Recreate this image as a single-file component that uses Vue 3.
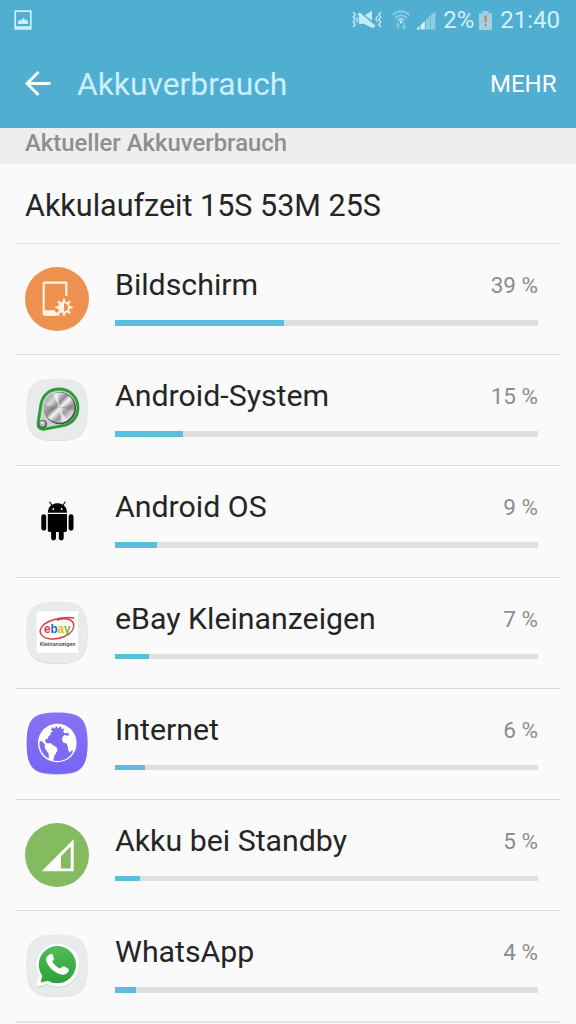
<template>
  <div class="screen">
    <header class="header">
      <!-- Statusleiste -->
      <div class="status-bar">
        <svg class="picture-icon" viewBox="0 0 18 20">
          <path d="M1.2 1.2H16.8V18.8H1.2Z" fill="none" stroke="#cdeefa" stroke-width="1.7" />
          <path d="M1 16.2H17V19H1Z" fill="#cdeefa" />
          <path d="M4 14V11.5L6 9.5L7.3 10.8L9.3 7.8L11 10L12.3 9.2L14 12V14Z" fill="#cdeefa" />
        </svg>
        <div class="status-right">
          <svg class="mute-icon" viewBox="0 0 30 20">
            <path d="M7 5.7H12L20 0.8V18L12 13.8H7Z" fill="#c3eaf8" />
            <path d="M5 0.2L25 16" stroke="#50aed1" stroke-width="2" />
            <path d="M6.5 3.5L22.5 17" stroke="#c3eaf8" stroke-width="3.2" />
            <path
              d="M1 2L3.3 4.5L1.2 7L3.3 9.5L1.2 12L3.3 14.5L1 17M4.5 7L6 9.7L4.5 12.5M29 2L26.7 4.5L28.8 7L26.7 9.5L28.8 12L26.7 14.5L29 17M25.5 6L23.8 9L25.5 12"
              fill="none" stroke="#c3eaf8" stroke-width="1.3"
            />
          </svg>
          <svg class="wifi-icon" viewBox="0 0 18 20">
            <path d="M0.8 5C5.5 0.2 12.5 0.2 17.2 5M3.3 8C6.7 4.7 11.3 4.7 14.7 8" fill="none" stroke="#8ed0e8" stroke-width="1.9" />
            <path d="M5.8 10.4C7.7 8.7 10.3 8.7 12.2 10.4" fill="none" stroke="#b3e2f3" stroke-width="1.7" />
            <circle cx="9" cy="12" r="1.4" fill="#d3f2fc" />
            <path d="M5.8 19V14M4 15.8L5.8 13.7L7.6 15.8M12.2 13V18M10.4 16.4L12.2 18.5L14 16.4" fill="none" stroke="#81c8e2" stroke-width="1.6" />
          </svg>
          <svg class="signal-icon" viewBox="0 0 20 19">
            <path d="M0 18.5L3.6 15V18.5Z" fill="#d3f2fc" />
            <path d="M4.7 18.5V14L8.8 10V18.5Z" fill="#d3f2fc" />
            <path d="M9.6 18.5V9.2L14.2 4.8V18.5ZM14.6 18.5V4.4L19.4 0V18.5Z" fill="#8bcde6" />
          </svg>
          <span class="battery-level">2%</span>
          <svg class="battery-icon" viewBox="0 0 13 19">
            <path d="M0 2.2H3.5V0H9.5V2.2H13V19H0Z" fill="#9bd2e5" />
            <path d="M5.5 4.5H7.7L7.3 12H5.9ZM5.6 13.3H7.6V15.3H5.6Z" fill="#cf7550" />
          </svg>
          <span class="clock">21:40</span>
        </div>
      </div>

      <!-- Titelleiste -->
      <div class="title-bar">
        <svg class="back-icon" viewBox="0 0 26 26">
          <path d="M13.5 1L2 12.5L13.5 24M2 12.5H25.5" fill="none" stroke="#fff" stroke-width="2.9" />
        </svg>
        <h1 class="title">Akkuverbrauch</h1>
        <span class="more">MEHR</span>
      </div>
    </header>

    <div class="section-title"><span>Aktueller Akkuverbrauch</span></div>

    <main class="content">
      <div class="runtime"><span>Akkulaufzeit 15S 53M 25S</span></div>

      <div v-for="item in items" :key="item.name" class="row">
        <svg class="app-icon" viewBox="0 0 64 64">
          <defs>
            <linearGradient id="metal" x1="0" y1="0" x2="1" y2="1">
              <stop offset="0" stop-color="#777" />
              <stop offset="0.28" stop-color="#d8d8d8" />
              <stop offset="0.42" stop-color="#8b8b8b" />
              <stop offset="0.52" stop-color="#f4f4f4" />
              <stop offset="0.66" stop-color="#999" />
              <stop offset="0.82" stop-color="#ddd" />
              <stop offset="1" stop-color="#555" />
            </linearGradient>
            <linearGradient id="violet" x1="0" y1="0" x2="0" y2="1">
              <stop offset="0" stop-color="#8b71f3" />
              <stop offset="1" stop-color="#7565f6" />
            </linearGradient>
            <linearGradient id="green" x1="0" y1="0" x2="0" y2="1">
              <stop offset="0" stop-color="#52bd56" />
              <stop offset="1" stop-color="#2ba03c" />
            </linearGradient>
          </defs>

          <template v-if="item.tile">
            <path :d="tilePath" transform="translate(0 0.7)" fill="#d6dcdb" />
            <path :d="tilePath" fill="#e7eceb" stroke="#dfe5e4" stroke-width="0.6" />
          </template>

          <g v-if="item.icon === 'display'">
            <circle cx="32" cy="32" r="32" fill="#ee904f" />
            <path d="M41.3 29V16.2Q41.3 15.7 40.8 15.7H20Q18.7 15.7 18.7 17V46Q18.7 47.6 20.2 47.6H31" fill="none" stroke="#fff3e2" stroke-width="2.2" />
            <path d="M18.7 43.3H29.5L31 45.5L34.5 46.5V48.6H20Q18.7 48.6 18.7 47.3Z" fill="#fff3e2" />
            <path v-for="n in 8" :key="n" d="M37.4 36L38.1 31.6H39.9L40.6 36Z" :transform="`rotate(${n * 45} 39 40.3)`" fill="#fff3e2" />
            <circle cx="39" cy="40.3" r="5" fill="#ee904f" stroke="#fff3e2" stroke-width="1.8" />
            <path d="M39 35.3A5 5 0 0 0 39 45.3Z" fill="#fff3e2" />
          </g>

          <g v-else-if="item.icon === 'system'">
            <path d="M15.8 27C17.5 16.5 25 11 34.3 11A18.7 18.7 0 0 1 53 29.8C53 39 47 45.8 38 47.7L19.5 51.2C15.3 51.7 12.6 49.5 13 45.5Z" fill="#c9d2ca" stroke="#4f8f54" stroke-width="2.8" />
            <path d="M15.8 27C17.5 16.5 25 11 34.3 11A18.7 18.7 0 0 1 53 29.8C53 39 47 45.8 38 47.7L19.5 51.2C15.3 51.7 12.6 49.5 13 45.5Z" fill="none" stroke="#20a52d" stroke-width="2.1" />
            <circle cx="35" cy="30.2" r="16" fill="#4c4c4c" />
            <circle cx="34.2" cy="29.6" r="15.2" fill="url(#metal)" />
            <path d="M34.2 29.6L20 35A15 15 0 0 1 19.2 27ZM34.2 29.6L48.8 26A15 15 0 0 1 49 32.5Z" fill="#666" opacity="0.35" />
            <path d="M34.2 29.6L28 16L33 14.4ZM34.2 29.6L37 44.4L42 42.5Z" fill="#fff" opacity="0.6" />
            <circle cx="17.9" cy="46.1" r="4.1" fill="#555" />
            <circle cx="17.5" cy="45.7" r="3" fill="#b7b7b7" />
            <path d="M15.7 44.5L18.2 43.7L18 46.3Z" fill="#fff" />
          </g>

          <g v-else-if="item.icon === 'android'">
            <path d="M22.8 23.8C22.8 11.2 42 11.2 42 23.8Z" />
            <path d="M27 16.5L24.7 13M37.8 16.5L40.1 13" stroke="#000" stroke-width="1.1" stroke-linecap="round" />
            <circle cx="28.3" cy="20" r="0.9" fill="#fafafa" />
            <circle cx="36.7" cy="20" r="0.9" fill="#fafafa" />
            <path d="M22.8 25H42V41.3Q42 43 40.3 43H24.5Q22.8 43 22.8 41.3Z" />
            <rect x="16.3" y="25.3" width="4.9" height="16.4" rx="2.4" />
            <rect x="43.6" y="25.3" width="4.9" height="16.4" rx="2.4" />
            <rect x="26.1" y="38" width="4.9" height="13.4" rx="2.4" />
            <rect x="33.8" y="38" width="4.9" height="13.4" rx="2.4" />
          </g>

          <g v-else-if="item.icon === 'ebay'">
            <path d="M11.7 10.2H53V51.8H11.7Z" fill="#fff" />
            <path d="M48.5 17C42 15.5 31 17.5 24.5 20.3C17 23.5 13.5 29 16 33C19.5 39.2 31 39 39.5 35.5C46 32.8 49.3 28 48.7 23.5C47.8 17.8 40 16.5 32.5 19" fill="none" stroke="#cf4444" stroke-width="1.5" stroke-linecap="round" />
            <text class="ebay-logo" x="19" y="32.3" textLength="26.6" lengthAdjust="spacingAndGlyphs"><tspan fill="#dc3444">e</tspan><tspan fill="#2865ba">b</tspan><tspan fill="#edb224">a</tspan><tspan fill="#83b52e">y</tspan></text>
            <text class="ebay-caption" x="14.7" y="44.6" textLength="35.8" lengthAdjust="spacingAndGlyphs">Kleinanzeigen</text>
          </g>

          <g v-else-if="item.icon === 'internet'">
            <path :d="tilePath" transform="translate(0 0.4)" fill="#b9b3e0" />
            <path :d="tilePath" transform="translate(0 -0.4)" fill="url(#violet)" />
            <circle cx="32.3" cy="31" r="19.3" fill="#fff" />
            <!-- Atlantik -->
            <path
              d="M20 28.6L21.5 26.6L22.6 27.4L23.5 24.3L25.8 22.6L25.4 20.3L28 20L26 17.8L27.5 15L30 16.8L31 13.8L33 16.6L35.3 14L36.8 17L39.5 16.6L38.2 19.4L39.8 21.2L42.6 20.8L44.6 22.8L42 24L40.3 22.8L37.8 24.3L37 27.6L38 30.5L41.5 31.6L42.8 34.4L43.2 38.6L45 40.4L47.4 37.6L47.6 40.5C44 46.5 38.5 49 32 49L28 48.4L29.6 43.5L32.6 38.2L31.4 35L28 33.3L26 31.2L21.4 31.2Z"
              fill="#7e6bf5"
            />
            <!-- Pazifik -->
            <path d="M15 29L17.3 29.6L20 32.6L19.6 35.3L21 38L23.5 41.2L24 46.6C18.5 44 14.3 37.5 14.4 31Z" fill="#7e6bf5" />
          </g>

          <g v-else-if="item.icon === 'standby'">
            <circle cx="32" cy="32" r="32" fill="#84bb60" />
            <path d="M16.7 48.3L48.7 16.3V48.3ZM36 33.2V45.4H45.7V23.5Z" fill="#fdfff9" fill-rule="evenodd" />
          </g>

          <g v-else-if="item.icon === 'whatsapp'">
            <path d="M11.8 54.3L14.2 42.2A21.6 21.6 0 1 1 22.6 50.7Z" fill="#aab5ae" opacity="0.5" />
            <path d="M11.3 53L13.8 41.2A21.6 21.6 0 1 1 22.4 50Z" fill="#fff" />
            <path d="M15.7 48.6L17.4 41.3L24 46.6Z" fill="#2fa33f" />
            <circle cx="32.3" cy="30.7" r="18.6" fill="url(#green)" />
            <path d="M24.5 20.4Q26.5 18.8 27.7 20.7L29 24.2Q29.3 25.5 27.3 27.3Q29.8 32.4 35 34.4L37.5 32.5Q38.3 31.9 39.3 32.5L43.1 34.6Q44.4 35.4 43.5 37.6Q41.2 41.4 36.5 40.6C28.5 38.7 22.7 32 21.2 26.8Q20.4 22.8 24.5 20.4Z" fill="#fff" />
          </g>
        </svg>

        <div class="usage">
          <div class="usage-text">
            <span class="name">{{ item.name }}</span>
            <span class="percent">{{ item.percent }} %</span>
          </div>
          <div class="bar">
            <div class="bar-fill" :style="{ width: `${item.percent + 1}%` }"></div>
          </div>
        </div>
      </div>
      <div class="last-line"></div>
    </main>
  </div>
</template>

<script setup>
import { ref } from 'vue';

// abgerundete Kachel hinter den App-Symbolen
const tilePath = 'M32 1C55 1 62.5 6 62.5 31.5S55 62.3 32 62.3S1.7 57 1.7 31.5S9 1 32 1Z';

const items = ref([
  { name: 'Bildschirm', percent: 39, icon: 'display' },
  { name: 'Android-System', percent: 15, icon: 'system', tile: true },
  { name: 'Android OS', percent: 9, icon: 'android' },
  { name: 'eBay Kleinanzeigen', percent: 7, icon: 'ebay', tile: true },
  { name: 'Internet', percent: 6, icon: 'internet' },
  { name: 'Akku bei Standby', percent: 5, icon: 'standby' },
  { name: 'WhatsApp', percent: 4, icon: 'whatsapp', tile: true },
]);
</script>

<style>
body {
  margin: 0;
  overflow: hidden;
}
</style>

<style scoped>
.screen {
  width: 576px;
  height: 1024px;
  overflow: hidden;
  background: #fafafa;
  font-family: Roboto, "Liberation Sans", sans-serif;
  color: #252525;
}

.header {
  height: 128px;
  background: #50aed1;
}

.status-bar {
  display: flex;
  justify-content: space-between;
  align-items: center;
  height: 40px;
  padding: 0 16px 0 14px;
  color: #d3f2fc;
}

.picture-icon {
  width: 18px;
  height: 20px;
}

.status-right {
  display: flex;
  align-items: center;
  font-size: 24px;
  line-height: 40px;
}

.mute-icon {
  width: 30px;
  height: 20px;
  margin-right: 10px;
}

.wifi-icon {
  width: 18px;
  height: 20px;
  margin-right: 6px;
}

.signal-icon {
  width: 20px;
  height: 19px;
  margin-right: 7px;
}

.battery-level {
  margin-right: 5px;
}

.battery-icon {
  width: 13px;
  height: 19px;
  margin-right: 8px;
}

.title-bar {
  display: flex;
  align-items: center;
  height: 88px;
  padding: 0 19.5px 0 25px;
}

.back-icon {
  width: 26px;
  height: 26px;
}

.title {
  flex: 1;
  margin: 0 0 0 26px;
  font-size: 31.8px;
  font-weight: 400;
  color: #c9f0fc;
}

.more {
  font-size: 24px;
  color: #fff;
}

.section-title {
  height: 36px;
  padding-left: 25px;
  background: #eee;
  color: #8f8f8f;
  font-size: 23.9px;
  font-weight: 500;
  line-height: 30px;
}

.content {
  padding: 0 16px;
}

.runtime {
  height: 79px;
  padding-left: 9px;
  font-size: 30.5px;
  line-height: 83px;
}

.row {
  display: flex;
  box-sizing: border-box;
  height: 111.2px;
  padding: 23px 22px 0 9px;
  border-top: 1px solid #dcdcdc;
}

.app-icon {
  flex: none;
  width: 64px;
  height: 64px;
  margin-right: 26px;
}

.usage {
  flex: 1;
}

.usage-text {
  display: flex;
  justify-content: space-between;
  height: 53px;
  line-height: 36px;
}

.name {
  font-size: 30.3px;
}

.percent {
  font-size: 22.5px;
  color: #8c8c8c;
}

.bar {
  height: 5.5px;
  background: #dfdfdf;
}

.bar-fill {
  height: 100%;
  background: #5bbfdc;
}

.last-line {
  height: 2px;
  background: #e5e5e5;
}

.ebay-logo {
  font-family: "Liberation Sans", Arial, sans-serif;
  font-size: 13px;
  font-weight: 700;
}

.ebay-caption {
  font-size: 6px;
  font-weight: 500;
  fill: #444;
}
</style>
